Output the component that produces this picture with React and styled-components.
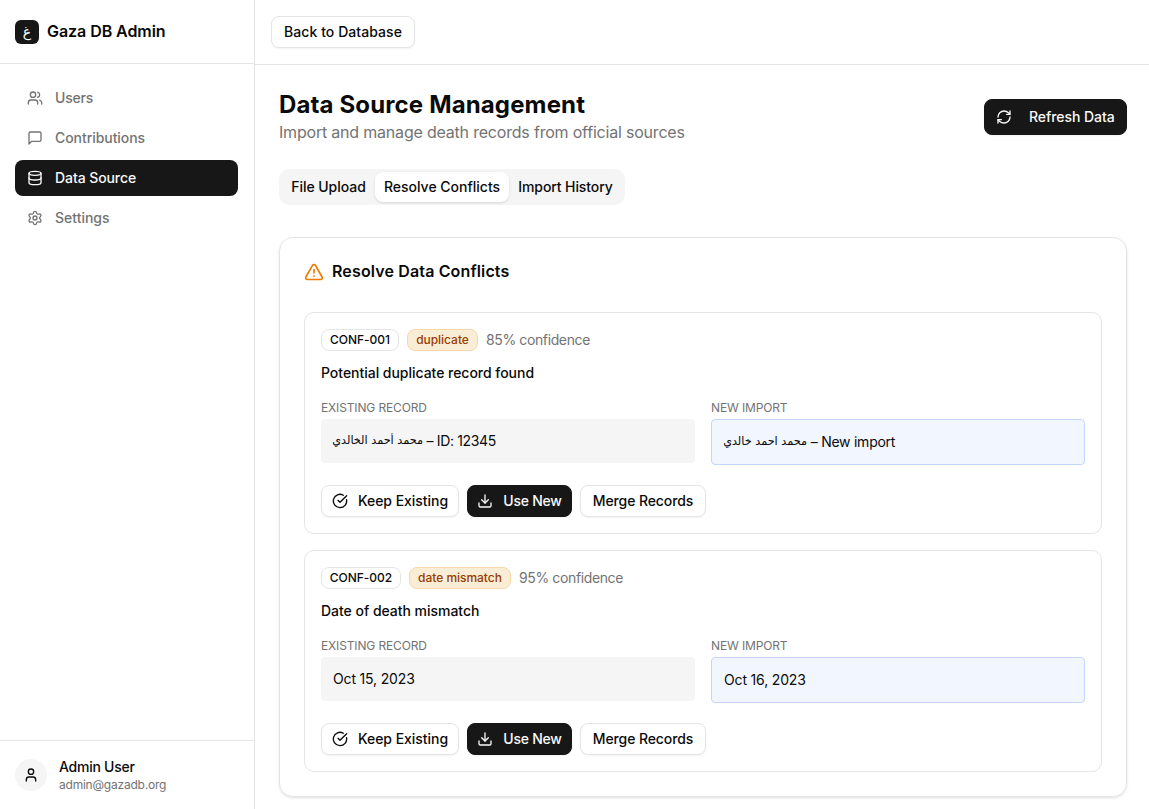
import React from "react";
import styled, { createGlobalStyle, css } from "styled-components";
import { Users, Database, Settings, RefreshCw, TriangleAlert, CircleCheckBig, Download, User } from "lucide-react";

const GlobalStyle = createGlobalStyle`
  *, *::before, *::after { box-sizing: border-box; }
  html, body { margin: 0; padding: 0; background: #fff; overflow: hidden; }
  body { font-family: Inter, "DejaVu Sans", sans-serif; color: #0a0a0a; font-size: 14px; line-height: 20px; }
  svg { flex-shrink: 0; display: block; }
  h1, h2, p { margin: 0; }
`;

const Shell = styled.div`
  display: flex;
  width: 100vw;
  height: 100vh;
  overflow: hidden;
`;
const Sidebar = styled.aside`
  width: 255px;
  flex-shrink: 0;
  display: flex;
  flex-direction: column;
  border-right: 1px solid #e5e5e5;
`;
const Brand = styled.div`
  height: 64px;
  display: flex;
  align-items: center;
  gap: 8px;
  padding: 0 15px;
  border-bottom: 1px solid #e5e5e5;
`;
const Logo = styled.div`
  width: 24px;
  height: 24px;
  border-radius: 6px;
  background: #171717;
  color: #fafafa;
  display: grid;
  place-items: center;
  font: 400 14px/16px "DejaVu Sans", sans-serif;
`;
const BrandName = styled.span`
  font-size: 16px;
  line-height: 24px;
  font-weight: 600;
  letter-spacing: -0.06px;
  padding-bottom: 2px;
`;
const Nav = styled.nav`
  flex: 1;
  display: flex;
  flex-direction: column;
  gap: 4px;
  padding: 16px;
  padding-left: 15px;
`;
const NavItem = styled.a`
  display: flex;
  align-items: center;
  gap: 12px;
  height: 36px;
  padding: 0 12px;
  border-radius: 8px;
  font-weight: 500;
  letter-spacing: ${(p) => p.$ls || 0}px;
  color: ${(p) => (p.$active ? "#fafafa" : "#737373")};
  background: ${(p) => (p.$active ? "#171717" : "transparent")};
`;
const Account = styled.div`
  height: 69px;
  display: flex;
  align-items: center;
  gap: 12px;
  padding: 0 15px;
  border-top: 1px solid #e5e5e5;
`;
const Avatar = styled.div`
  width: 32px;
  height: 32px;
  border-radius: 50%;
  background: #f5f5f5;
  display: grid;
  place-items: center;
`;
const AccountName = styled.div`
  font-weight: 500;
  line-height: 20px;
  letter-spacing: -0.25px;
`;
const AccountMail = styled.div`
  font-size: 12px;
  line-height: 16px;
  color: #737373;
  letter-spacing: -0.22px;
`;

const Main = styled.main`
  flex: 1;
  min-width: 0;
  display: flex;
  flex-direction: column;
`;
const TopBar = styled.header`
  height: 65px;
  flex-shrink: 0;
  display: flex;
  align-items: center;
  padding: 0 16px;
  border-bottom: 1px solid #e5e5e5;
`;
const Button = styled.button`
  display: inline-flex;
  align-items: center;
  justify-content: center;
  flex-shrink: 0;
  gap: ${(p) => p.$gap || 10}px;
  width: ${(p) => p.$w}px;
  height: ${(p) => p.$h || 32}px;
  padding: 0;
  border: 1px solid #e5e5e5;
  border-radius: 8px;
  background: #fff;
  color: #0a0a0a;
  font: inherit;
  font-weight: 500;
  white-space: nowrap;
  letter-spacing: ${(p) => p.$ls || 0}px;
  box-shadow: 0 1px 2px rgba(0, 0, 0, 0.05);
  ${(p) => p.$dark && css`
    border-color: #171717;
    background: #171717;
    color: #fafafa;
  `}
`;
const Content = styled.div`
  padding: 24px 22px 12px 24px;
  display: flex;
  flex-direction: column;
`;
const PageHead = styled.div`
  display: flex;
  align-items: center;
  justify-content: space-between;
  height: 56px;
`;
const Title = styled.h1`
  font-size: 24px;
  line-height: 32px;
  font-weight: 700;
  letter-spacing: 0.14px;
`;
const Subtitle = styled.p`
  font-size: 16px;
  line-height: 22px;
  margin-bottom: 2px;
  color: #737373;
  letter-spacing: -0.2px;
`;
const Tabs = styled.div`
  display: flex;
  align-self: flex-start;
  height: 36px;
  margin: 24px 0 32px;
  padding: 3px;
  border-radius: 10px;
  background: #f5f5f5;
`;
const Tab = styled.div`
  display: flex;
  align-items: center;
  justify-content: center;
  width: ${(p) => p.$w}px;
  height: 30px;
  border-radius: 8px;
  font-weight: 500;
  white-space: nowrap;
  letter-spacing: ${(p) => p.$ls || 0}px;
  ${(p) => p.$active && css`
    background: #fff;
    box-shadow: 0 1px 3px rgba(0, 0, 0, 0.1), 0 1px 2px -1px rgba(0, 0, 0, 0.1);
  `}
`;
const Card = styled.section`
  height: 560px;
  border: 1px solid #e5e5e5;
  border-radius: 14px;
  padding: 22px 24px 24px;
  box-shadow: 0 1px 3px rgba(0, 0, 0, 0.1), 0 1px 2px -1px rgba(0, 0, 0, 0.1);
`;
const CardTitle = styled.h2`
  display: flex;
  align-items: center;
  gap: 8px;
  height: 24px;
  margin-bottom: 28px;
  font-size: 16px;
  font-weight: 600;
  letter-spacing: 0.14px;
`;
const CardTitleText = styled.span`
  padding-bottom: 2px;
`;
const ConflictList = styled.div`
  display: flex;
  flex-direction: column;
  gap: 16px;
`;
const Conflict = styled.article`
  height: 222px;
  padding: 16px;
  border: 1px solid #e5e5e5;
  border-radius: 10px;
`;
const Meta = styled.div`
  display: flex;
  align-items: center;
  gap: 8px;
  height: 22px;
`;
const Badge = styled.span`
  display: inline-flex;
  align-items: center;
  justify-content: center;
  width: ${(p) => p.$w}px;
  height: 22px;
  border: 1px solid ${(p) => (p.$warn ? "#f7d7a8" : "#e5e5e5")};
  border-radius: 8px;
  background: ${(p) => (p.$warn ? "#faedd6" : "#fff")};
  color: ${(p) => (p.$warn ? "#973c00" : "#0a0a0a")};
  font-size: 12px;
  line-height: 16px;
  font-weight: 500;
  white-space: nowrap;
  letter-spacing: -0.03px;
`;
const Confidence = styled.span`
  color: #737373;
  letter-spacing: -0.38px;
`;
const Summary = styled.p`
  margin-top: 12px;
  font-weight: 500;
  letter-spacing: -0.03px;
`;
const Compare = styled.div`
  display: grid;
  grid-template-columns: 1fr 1fr;
  gap: 16px;
  height: 66px;
  margin: 16px 0 20px;
`;
const Label = styled.div`
  font-size: 12px;
  line-height: 16px;
  padding-top: 1px;
  margin-bottom: 3px;
  color: #737373;
  letter-spacing: -0.14px;
`;
const RecordBox = styled.div`
  display: flex;
  align-items: center;
  height: ${(p) => (p.$incoming ? 46 : 44)}px;
  padding: 0 12px;
  border-radius: 4px;
  background: ${(p) => (p.$incoming ? "#f2f6ff" : "#f5f5f5")};
  border: ${(p) => (p.$incoming ? "1px solid #c2d6ff" : "0")};
  white-space: pre;
  letter-spacing: ${(p) => p.$ls}px;
`;
const Arabic = styled.bdi`
  width: ${(p) => p.$w}px;
  font-family: "DejaVu Sans", sans-serif;
  font-size: 11.25px;
  line-height: 20px;
  letter-spacing: 0;
  white-space: nowrap;
`;
const Actions = styled.div`
  display: flex;
  gap: 8px;
`;

const MessageIcon = () => (
  <svg width="16" height="16" viewBox="0 0 24 24" fill="none" stroke="currentColor" strokeWidth="2" strokeLinecap="round" strokeLinejoin="round">
    <path d="M21 15a2 2 0 0 1-2 2H7l-4 4V5a2 2 0 0 1 2-2h14a2 2 0 0 1 2 2z" />
  </svg>
);

const nav = [
  { icon: Users, label: "Users", ls: -0.2 },
  { icon: MessageIcon, label: "Contributions", ls: -0.06 },
  { icon: Database, label: "Data Source", active: true, ls: -0.08 },
  { icon: Settings, label: "Settings", ls: 0 },
];

const conflicts = [
  {
    id: "CONF-001", idW: 78, kind: "duplicate", kindW: 71, confidence: "85% confidence",
    summary: "Potential duplicate record found",
    existing: { name: "محمد أحمد الخالدي", w: 90, text: " – ID: 12345", ls: -0.36 },
    incoming: { name: "محمد احمد خالدي", w: 83, text: " – New import", ls: -0.25 },
  },
  {
    id: "CONF-002", idW: 80, kind: "date mismatch", kindW: 102, confidence: "95% confidence",
    summary: "Date of death mismatch",
    existing: { text: "Oct 15, 2023", ls: -0.16 },
    incoming: { text: "Oct 16, 2023", ls: -0.16 },
  },
];

const Value = ({ value }) => (
  <>
    {value.name && <Arabic $w={value.w} dir="rtl">{value.name}</Arabic>}
    <span>{value.text}</span>
  </>
);

export default function App() {
  return (
    <Shell>
      <GlobalStyle />
      <Sidebar>
        <Brand>
          <Logo>غ</Logo>
          <BrandName>Gaza DB Admin</BrandName>
        </Brand>
        <Nav>
          {nav.map(({ icon: Icon, label, active, ls }) => (
            <NavItem key={label} $active={active} $ls={ls}><Icon size={16} />{label}</NavItem>
          ))}
        </Nav>
        <Account>
          <Avatar><User size={16} /></Avatar>
          <div>
            <AccountName>Admin User</AccountName>
            <AccountMail>admin@gazadb.org</AccountMail>
          </div>
        </Account>
      </Sidebar>
      <Main>
        <TopBar><Button $w={144} $ls={0.06}>Back to Database</Button></TopBar>
        <Content>
          <PageHead>
            <div>
              <Title>Data Source Management</Title>
              <Subtitle>Import and manage death records from official sources</Subtitle>
            </div>
            <Button $dark $w={143} $h={36} $gap={16.5} $ls={-0.05}><RefreshCw size={16} />Refresh Data</Button>
          </PageHead>
          <Tabs>
            <Tab $w={93} $ls={-0.04}>File Upload</Tab>
            <Tab $w={134} $active>Resolve Conflicts</Tab>
            <Tab $w={113} $ls={-0.1}>Import History</Tab>
          </Tabs>
          <Card>
            <CardTitle><TriangleAlert size={20} color="#f07900" /><CardTitleText>Resolve Data Conflicts</CardTitleText></CardTitle>
            <ConflictList>
              {conflicts.map((c) => (
                <Conflict key={c.id}>
                  <Meta>
                    <Badge $w={c.idW}>{c.id}</Badge>
                    <Badge $warn $w={c.kindW}>{c.kind}</Badge>
                    <Confidence>{c.confidence}</Confidence>
                  </Meta>
                  <Summary>{c.summary}</Summary>
                  <Compare>
                    <div>
                      <Label>EXISTING RECORD</Label>
                      <RecordBox $ls={c.existing.ls}><Value value={c.existing} /></RecordBox>
                    </div>
                    <div>
                      <Label>NEW IMPORT</Label>
                      <RecordBox $incoming $ls={c.incoming.ls}><Value value={c.incoming} /></RecordBox>
                    </div>
                  </Compare>
                  <Actions>
                    <Button $w={138} $ls={-0.04}><CircleCheckBig size={16} />Keep Existing</Button>
                    <Button $dark $w={105} $ls={-0.22}><Download size={16} />Use New</Button>
                    <Button $w={126} $ls={-0.1}>Merge Records</Button>
                  </Actions>
                </Conflict>
              ))}
            </ConflictList>
          </Card>
        </Content>
      </Main>
    </Shell>
  );
}
